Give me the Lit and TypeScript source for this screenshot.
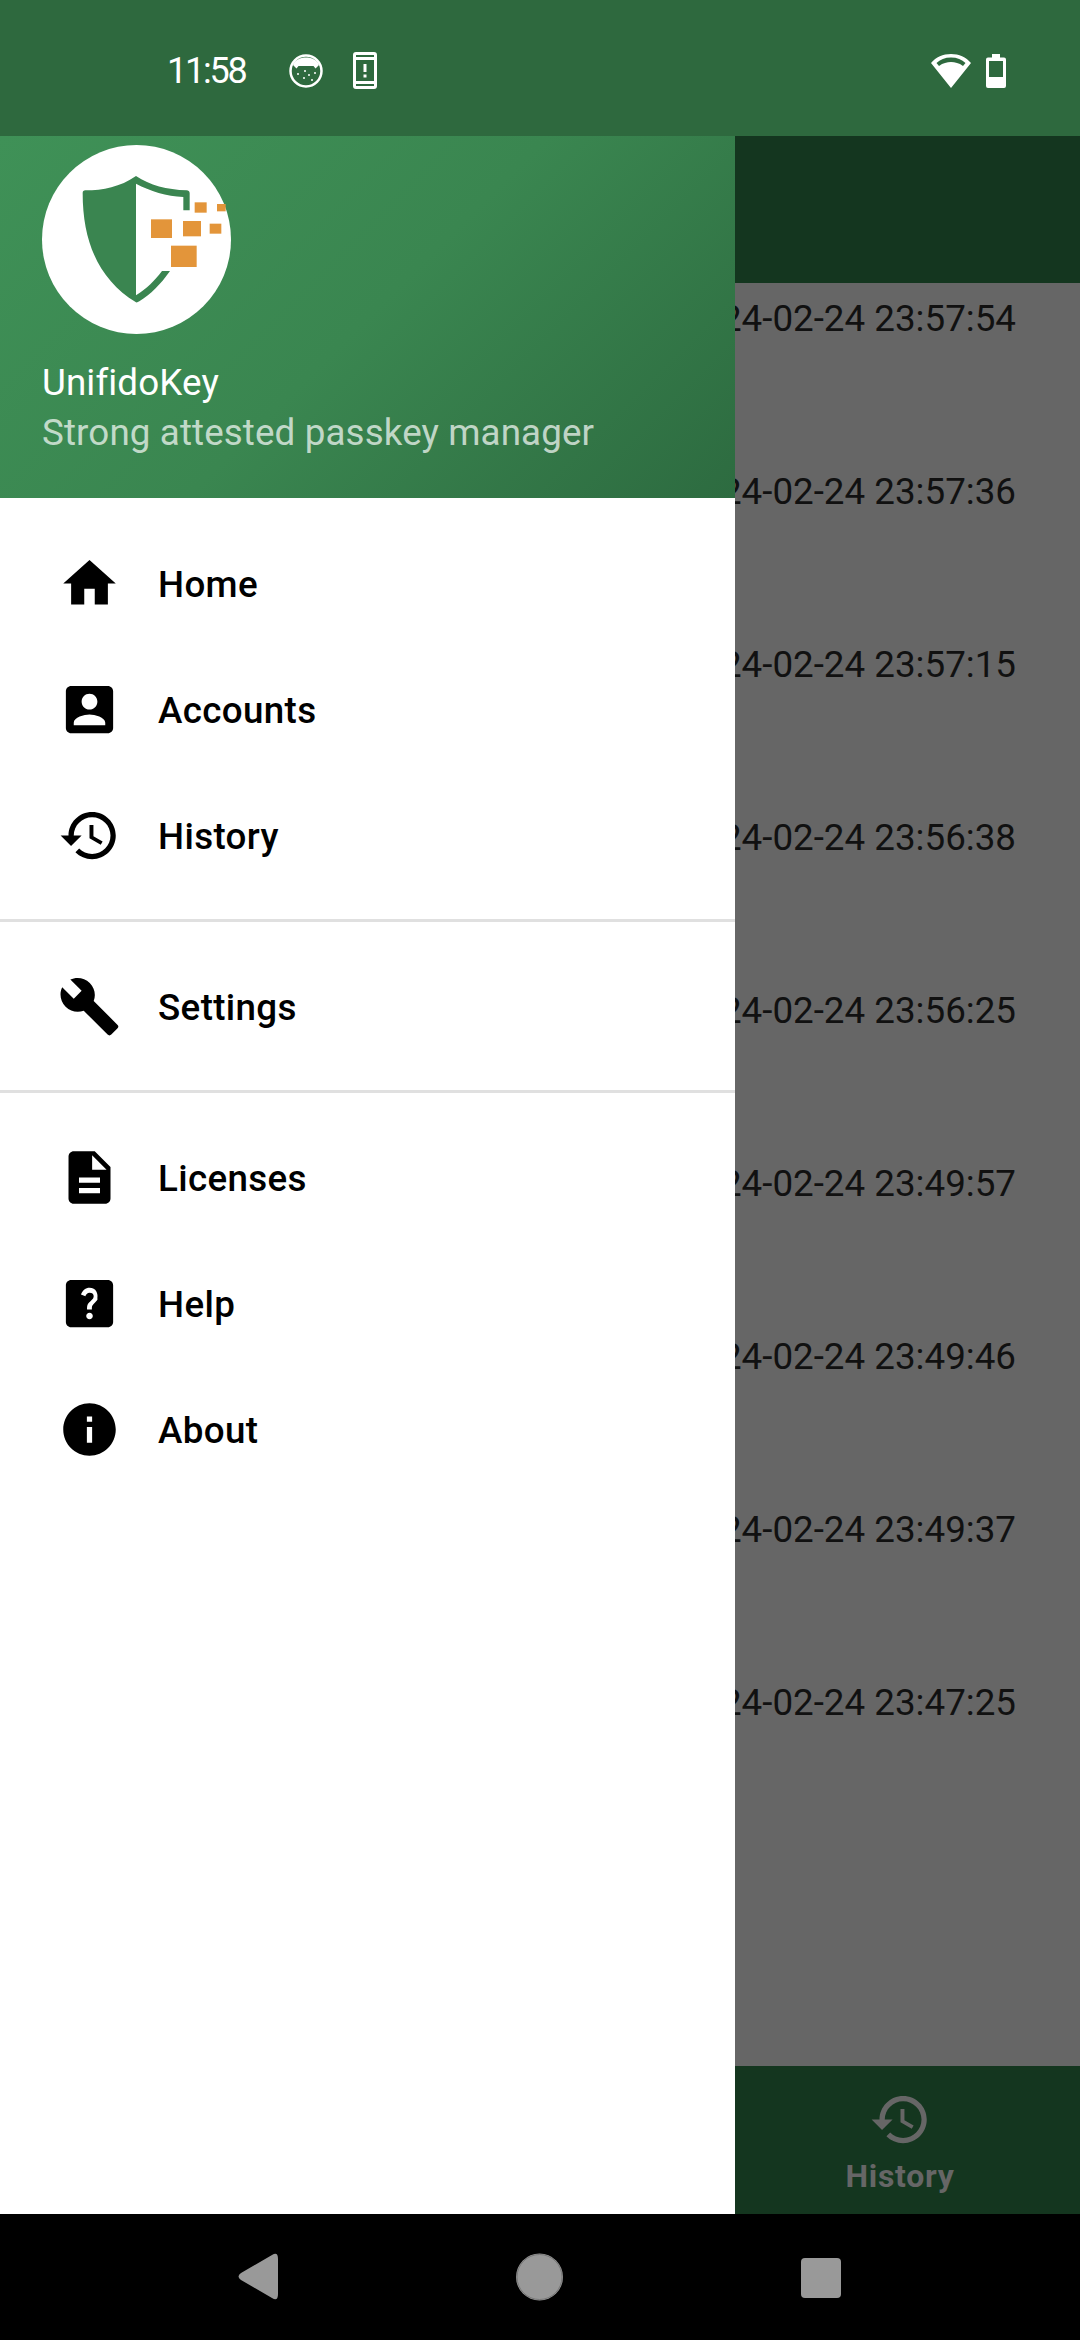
import { LitElement, html, css, svg } from "lit"
import { customElement } from "lit/decorators.js"

const ICONS = {
    home: "M10 20v-6h4v6h5v-8h3L12 3 2 12h3v8z",
    accounts: "M3 5v14c0 1.1.89 2 2 2h14c1.1 0 2-.9 2-2V5c0-1.1-.9-2-2-2H5c-1.11 0-2 .9-2 2zm12 4c0 1.66-1.34 3-3 3s-3-1.34-3-3 1.34-3 3-3 3 1.34 3 3zm-9 8c0-2 4-3.1 6-3.1s6 1.1 6 3.1v1H6v-1z",
    history: "M13 3c-4.97 0-9 4.03-9 9H1l3.89 3.89.07.14L9 12H6c0-3.87 3.13-7 7-7s7 3.13 7 7-3.13 7-7 7c-1.93 0-3.68-.79-4.94-2.06l-1.42 1.42C8.27 19.99 10.51 21 13 21c4.97 0 9-4.03 9-9s-4.03-9-9-9zm-1 5v5l4.28 2.54.72-1.21-3.5-2.08V8H12z",
    settings: "M22.7 19l-9.1-9.1c.9-2.3.4-5-1.5-6.9-2-2-5-2.4-7.4-1.3L9 6 6 9 1.6 4.7C.4 7.1.9 10.1 2.9 12.1c1.9 1.9 4.6 2.4 6.9 1.5l9.1 9.1c.4.4 1 .4 1.4 0l2.3-2.3c.5-.4.5-1.1.1-1.4z",
    licenses: "M14 2H6c-1.1 0-1.99.9-1.99 2L4 20c0 1.1.89 2 1.99 2H18c1.1 0 2-.9 2-2V8l-6-6zm2 16H8v-2h8v2zm0-4H8v-2h8v2zm-3-5V3.5L18.5 9H13z",
    help: "M19 3H5c-1.11 0-2 .9-2 2v14c0 1.1.89 2 2 2h14c1.1 0 2-.9 2-2V5c0-1.1-.9-2-2-2zm-6.99 15c-.7 0-1.26-.56-1.26-1.26 0-.71.56-1.25 1.26-1.25.71 0 1.25.54 1.25 1.25-.01.69-.54 1.26-1.25 1.26zm3.01-7.4c-.76 1.11-1.48 1.46-1.89 2.2-.17.3-.23.5-.23 1.47h-1.83c0-.51-.08-1.34.32-2.05.51-.9 1.47-1.44 1.97-2.16.53-.75.23-2.16-1.27-2.16-.98 0-1.46.74-1.66 1.36l-1.67-.7C9.33 7.01 10.55 6 12.01 6c1.25 0 2.11.57 2.55 1.29.38.62.6 1.77.45 2.31z",
    about: "M12 2C6.48 2 2 6.48 2 12s4.48 10 10 10 10-4.48 10-10S17.52 2 12 2zm1 15h-2v-6h2v6zm0-8h-2V7h2v2z",
}

const GROUPS: [keyof typeof ICONS, string][][] = [
    [["home", "Home"], ["accounts", "Accounts"], ["history", "History"]],
    [["settings", "Settings"]],
    [["licenses", "Licenses"], ["help", "Help"], ["about", "About"]],
]

const TIMES = [
    "2024-02-24 23:57:54",
    "2024-02-24 23:57:36",
    "2024-02-24 23:57:15",
    "2024-02-24 23:56:38",
    "2024-02-24 23:56:25",
    "2024-02-24 23:49:57",
    "2024-02-24 23:49:46",
    "2024-02-24 23:49:37",
    "2024-02-24 23:47:25",
]

// orange pixels of the logo: x, y, w, h
const LOGO_BITS = [
    [453, 267, 63, 56],
    [549, 272, 54, 46],
    [629, 280, 35, 30],
    [584, 216, 36, 31],
    [651, 221, 26, 22],
    [513, 346, 77, 64],
]

const materialIcon = (d: string, cls: string) =>
    html`<svg class=${cls} viewBox="0 0 24 24"><path d=${d}></path></svg>`

@customElement("app-root")
export class AppRoot extends LitElement {
    static styles = css`
        :host {
            display: block;
            position: relative;
            width: 1080px;
            height: 2340px;
            overflow: hidden;
            font-family: Roboto, sans-serif;
        }
        .page {
            display: flex;
            flex-direction: column;
            height: 2340px;
        }

        /* Status bar */
        .status {
            position: relative;
            z-index: 2;
            flex: none;
            height: 136px;
            display: flex;
            align-items: center;
            padding: 5px 74px 0 167px;
            box-sizing: border-box;
            background: #2e693e;
            color: #fff;
        }
        .clock {
            font-size: 36px;
            font-weight: 400;
            letter-spacing: -2.200px;
            width: 122px;
        }
        .status svg {
            display: block;
            fill: #fff;
        }
        .mini {
            width: 34px;
            height: 34px;
            margin-right: 30px;
        }
        .phone {
            width: 24px;
            height: 37px;
        }
        .spacer {
            flex: 1;
        }
        .wifi {
            width: 40px;
            height: 34px;
            margin-right: 15px;
        }
        .battery {
            width: 20px;
            height: 34px;
        }

        /* Dimmed screen behind the drawer */
        .appbar {
            flex: none;
            height: 147px;
            background: #14361f;
        }
        .list {
            flex: 1;
            background: #666;
            padding: 14px 64px 0 0;
            color: #111;
            font-size: 36.750px;
            text-align: right;
        }
        .list div {
            height: 173px;
            line-height: 43px;
        }
        .tabs {
            flex: none;
            height: 148px;
            background: #14361f;
            display: grid;
            grid-template-columns: repeat(3, 1fr);
        }
        .tab {
            grid-column: 3;
            display: flex;
            flex-direction: column;
            align-items: center;
            color: #666;
            font-size: 32px;
            font-weight: 700;
            letter-spacing: 0.700px;
            padding-top: 22px;
        }
        .tab svg {
            width: 63px;
            height: 63px;
            fill: #666;
            margin-bottom: 7px;
        }
        .tab span {
            line-height: 37px;
        }
        .nav {
            flex: none;
            height: 126px;
            background: #000;
            display: flex;
        }
        .nav svg {
            display: block;
            width: 1080px;
            height: 126px;
            fill: #999;
        }
        .nav .ring {
            fill: none;
            stroke: #777;
            stroke-width: 1;
        }

        /* Drawer */
        .drawer {
            position: absolute;
            z-index: 1;
            top: 136px;
            left: 0;
            bottom: 126px;
            width: 735px;
            background: #fff;
        }
        .head {
            height: 362px;
            box-sizing: border-box;
            padding: 9px 42px 0;
            background: linear-gradient(135deg, #3f9157 0%, #3a8650 50%, #2d6b40 100%);
            color: #fff;
            font-size: 36.750px;
            letter-spacing: 0.120px;
        }
        .logo {
            display: block;
            width: 189px;
            height: 189px;
            margin-bottom: 24px;
        }
        .name,
        .tagline {
            line-height: 50px;
        }
        .tagline {
            color: rgba(255, 255, 255, 0.7);
        }
        .menu {
            padding: 22px 0 0;
        }
        .group + .group {
            margin-top: 21px;
            padding-top: 21px;
            border-top: 3px solid #e0e0e0;
        }
        .item {
            height: 126px;
            display: flex;
            align-items: center;
            padding-left: 58px;
            font-size: 36.750px;
            font-weight: 500;
            letter-spacing: 0.350px;
            color: #000;
        }
        .item span {
            position: relative;
            top: 1px;
        }
        .item svg {
            width: 63px;
            height: 63px;
            margin-right: 37px;
            fill: #000;
        }
    `

    logo() {
        return html`<svg class="logo" viewBox="126 44 567 567">
            <circle cx="409.5" cy="327.5" r="283.5" fill="#fff"></circle>
            <path
                fill="#3a8550"
                d="M408 137C360 170 310 180 256 180Q248 180 248 188C248 340 300 450 408 516Q412 517 418 513C452 492 482 462 510 422H486C465 450 440 475 408 495V160C450 182 500 198 550 200V240H569V188Q568 180 560 180C500 178 450 165 408 137Z"
            ></path>
            ${LOGO_BITS.map(
                ([x, y, w, h]) => svg`<rect x=${x} y=${y} width=${w} height=${h} fill="#e3953a"></rect>`
            )}
        </svg>`
    }

    statusBar() {
        return html`<div class="status">
            <span class="clock">11:58</span>
            <svg class="mini" viewBox="0 0 34 34">
                <circle cx="17" cy="17" r="15.500" fill="none" stroke="#fff" stroke-width="2.500"></circle>
                <path d="M4 11C7 1 27 1 30 11L26.500 14.500 24.500 12H9.500L7.500 14.500Z"></path>
                <g opacity="0.75">
                    <rect x="8" y="19" width="2" height="2"></rect>
                    <rect x="14" y="23" width="2" height="2"></rect>
                    <rect x="19" y="20" width="2" height="2"></rect>
                    <rect x="25" y="18" width="2" height="2"></rect>
                    <rect x="22" y="25" width="2" height="2"></rect>
                    <rect x="15" y="16" width="2" height="2"></rect>
                </g>
            </svg>
            <svg class="phone" viewBox="0 0 24 37">
                <path
                    fill-rule="evenodd"
                    d="M3 0H21A3 3 0 0 1 24 3V34A3 3 0 0 1 21 37H3A3 3 0 0 1 0 34V3A3 3 0 0 1 3 0ZM3 3V5H21V3ZM3 8V29H21V8ZM3 32V34H21V32ZM10.500 12H13.500V20H10.500ZM10.500 22.500H13.500V25.500H10.500Z"
                ></path>
            </svg>
            <span class="spacer"></span>
            <svg class="wifi" viewBox="0 0 40 34">
                <path
                    fill-rule="evenodd"
                    d="M20 0C28 0 35 3 40 9L20 34 0 9C5 3 12 0 20 0ZM20 3.500C14 3.500 9 5.500 5.500 9L8 12C12 9 16 8 20 8S28 9 32 12L34.500 9C31 5.500 26 3.500 20 3.500Z"
                ></path>
            </svg>
            <svg class="battery" viewBox="0 0 20 34">
                <path
                    fill-rule="evenodd"
                    d="M6 0H14V3.500H18A2 2 0 0 1 20 5.500V32A2 2 0 0 1 18 34H2A2 2 0 0 1 0 32V5.500A2 2 0 0 1 2 3.500H6ZM3 7V23H17V7Z"
                ></path>
            </svg>
        </div>`
    }

    render() {
        return html`
            <div class="page">
                ${this.statusBar()}
                <div class="appbar"></div>
                <div class="list">${TIMES.map((t) => html`<div>${t}</div>`)}</div>
                <div class="tabs">
                    <div class="tab">
                        ${materialIcon(ICONS.history, "")}
                        <span>History</span>
                    </div>
                </div>
                <div class="nav">
                    <svg viewBox="0 0 1080 126">
                        <path d="M272 41Q278 37 278 45V80Q278 88 272 84L241 66Q236 62.500 241 59Z"></path>
                        <circle cx="539.500" cy="63" r="23.500"></circle>
                        <circle class="ring" cx="539.500" cy="63" r="22.500"></circle>
                        <rect x="801" y="44" width="40" height="40" rx="4"></rect>
                    </svg>
                </div>
            </div>
            <div class="drawer">
                <div class="head">
                    ${this.logo()}
                    <div class="name">UnifidoKey</div>
                    <div class="tagline">Strong attested passkey manager</div>
                </div>
                <div class="menu">
                    ${GROUPS.map(
                        (group) => html`<div class="group">
                            ${group.map(
                                ([icon, label]) => html`<div class="item">
                                    ${materialIcon(ICONS[icon], "")}
                                    <span>${label}</span>
                                </div>`
                            )}
                        </div>`
                    )}
                </div>
            </div>
        `
    }
}
